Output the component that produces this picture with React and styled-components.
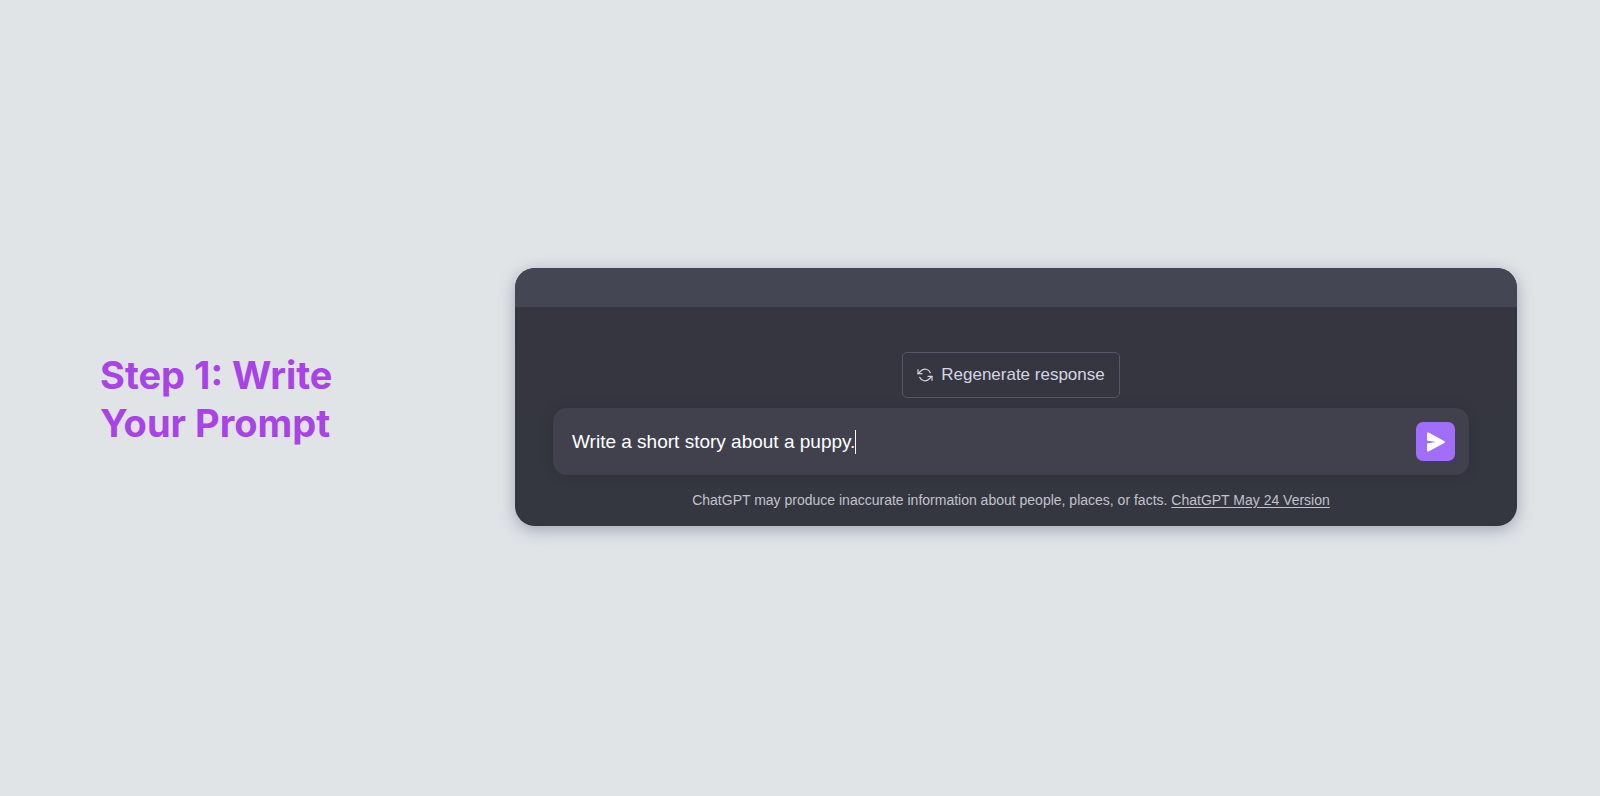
import { useState } from "react";
import styled, { createGlobalStyle } from "styled-components";

export default function App() {
    const [prompt, setPrompt] = useState("Write a short story about a puppy.");

    return (
        <>
            <GlobalStyle/>
            <Page>
                <Title>Step 1: Write Your Prompt</Title>

                <ChatCard>
                    <TopBand/>
                    <CardBody>
                        <RegenerateButton type="button">
                            <RefreshIcon/>
                            Regenerate response
                        </RegenerateButton>

                        <PromptForm onSubmit={(e) => e.preventDefault()}>
                            <PromptInput
                                type="text"
                                aria-label="Prompt"
                                value={prompt}
                                onChange={(e) => setPrompt(e.target.value)}
                            />
                            <Caret/>
                            <SendButton type="submit" aria-label="Send">
                                <SendIcon/>
                            </SendButton>
                        </PromptForm>

                        <Disclaimer>
                            ChatGPT may produce inaccurate information about people, places, or facts.{" "}
                            <VersionLink href="#">ChatGPT May 24 Version</VersionLink>
                        </Disclaimer>
                    </CardBody>
                </ChatCard>
            </Page>
        </>
    )
}

function RefreshIcon() {
    return (
        <svg width="16" height="16" viewBox="0 0 24 24" fill="none" stroke="currentColor"
            strokeWidth="1.8" strokeLinecap="round" strokeLinejoin="round" aria-hidden="true">
            <path d="M1.500 4v6h6"/>
            <path d="M22.500 20v-6h-6"/>
            <path d="M20 8.500A8.600 8.600 0 0 0 5.800 6L1.500 10m21 4l-4.300 4A8.600 8.600 0 0 1 4 15.500"/>
        </svg>
    )
}

function SendIcon() {
    return (
        <svg width="20" height="20" viewBox="0 0 20 20" fill="currentColor" aria-hidden="true">
            <path d="M1 1.600C1 .8 1.800.3 2.500.6L18.200 8.900a1.200 1.200 0 0 1 0 2.200L2.500 19.400C1.800 19.700 1 19.200 1 18.400V12.200c0-.5.4-.9.900-1L10 10 1.900 8.800c-.5-.1-.9-.5-.9-1z"/>
        </svg>
    )
}

const GlobalStyle = createGlobalStyle`
    body {
        margin: 0;
        background: #e0e4e7;
        font-family: "Liberation Sans", Arial, sans-serif;
    }
`;

const Page = styled.main`
    display: flex;
    align-items: center;
    justify-content: space-between;
    gap: 2em;
    min-height: 100vh;
    padding: 0 83px 2px 100px;
    box-sizing: border-box;

    @media (max-width: 900px) {
        flex-direction: column;
        justify-content: center;
        padding: 2em;
    }
`;

const Title = styled.h1`
    max-width: 260px;
    margin: 0;
    padding-top: 4px;
    color: #a843e6;
    font-family: Inter, sans-serif;
    font-size: 38px;
    font-weight: 700;
    line-height: 48px;
`;

const ChatCard = styled.section`
    flex: 0 1 1002px;
    overflow: hidden;
    border-radius: 20px;
    background: linear-gradient(#353540, #343740);
    box-shadow: 0 4px 16px rgba(70, 75, 105, 0.4);
`;

const TopBand = styled.div`
    height: 39px;
    background: #444654;
`;

const CardBody = styled.div`
    display: flex;
    flex-direction: column;
    align-items: center;
    padding: 45px 48px 15px 38px;
`;

const RegenerateButton = styled.button`
    display: flex;
    align-items: center;
    gap: 8px;
    height: 46px;
    padding: 0 14px;
    border: 1px solid #565869;
    border-radius: 5px;
    background: transparent;
    color: #d5d5e2;
    font-family: inherit;
    font-size: 17px;
    cursor: pointer;
`;

const PromptForm = styled.form`
    display: flex;
    align-items: center;
    width: 100%;
    height: 67px;
    margin-top: 10px;
    padding: 0 14px 0 19px;
    box-sizing: border-box;
    border-radius: 14px;
    background: #41414d;
    box-shadow: 0 0 14px rgba(0, 0, 0, 0.1);
`;

const PromptInput = styled.input`
    field-sizing: content;
    min-width: 0;
    padding: 0;
    border: 0;
    outline: none;
    background: transparent;
    color: #fff;
    font-family: inherit;
    font-size: 19px;
    caret-color: transparent;
`;

const Caret = styled.span`
    width: 1px;
    height: 24px;
    background: #fff;
`;

const SendButton = styled.button`
    display: flex;
    align-items: center;
    justify-content: center;
    flex-shrink: 0;
    width: 39px;
    height: 39px;
    margin-left: auto;
    padding: 0;
    border: 0;
    border-radius: 7px;
    background: #a06ef8;
    color: #fff;
    cursor: pointer;
`;

const Disclaimer = styled.p`
    margin: 14px 0 0;
    color: #c1c2cc;
    font-size: 14px;
    line-height: 22px;
    text-align: center;
`;

const VersionLink = styled.a`
    color: inherit;
    text-decoration: underline;
    text-underline-offset: 2px;
`;
